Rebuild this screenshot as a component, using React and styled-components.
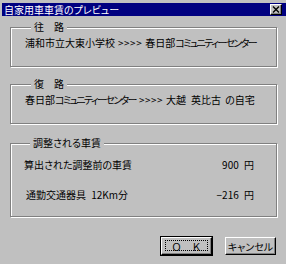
import styled, { createGlobalStyle } from "styled-components";

const GlobalStyle = createGlobalStyle`
  html, body {
    margin: 0;
    padding: 0;
    background: #c0c0c0;
  }
  body {
    font-family: "Noto Sans CJK JP", "Liberation Sans", sans-serif;
    font-size: 10px;
    color: #000;
  }
`;

export const Window = styled.div`
  width: 286px;
  height: 264px;
  box-sizing: border-box;
  padding: 3px 0 0 2px;
  background: #c0c0c0;
  overflow: hidden;
  font-feature-settings: "palt";
`;

export const TitleBar = styled.div`
  height: 13px;
  display: flex;
  align-items: center;
  justify-content: space-between;
  padding: 0 4px 0 2px;
  background: #000080;
  color: #fff;
  font-size: 10px;
  line-height: 13px;
`;

export const CloseButton = styled.div`
  width: 12px;
  height: 11px;
  box-sizing: border-box;
  display: flex;
  align-items: center;
  justify-content: center;
  background: #c0c0c0;
  border-top: 1px solid #fff;
  border-left: 1px solid #fff;
  border-right: 1px solid #000;
  border-bottom: 1px solid #000;
  box-shadow: inset -1px -1px 0 #808080;
`;

export const Content = styled.div`
  display: flex;
  flex-direction: column;
  padding: 5px 9px 0 8px;
`;

export const Group = styled.fieldset`
  margin: ${(p) => p.$gap || 0}px 0 0 0;
  padding: ${(p) => p.$pad || "4px 0 17px 14px"};
  border: 1px solid #808080;
  box-shadow: 1px 1px 0 #fff, inset 1px 1px 0 #fff;
  min-width: 0;
`;

export const Legend = styled.legend`
  margin-left: 6px;
  padding: 0 3px;
  background: #c0c0c0;
  line-height: 12px;
  font-size: 10px;
`;

export const RouteText = styled.div`
  line-height: 12px;
  white-space: nowrap;
`;

export const Kana = styled.span`
  letter-spacing: -1.6px;
`;

export const Arrows = styled.span`
  margin: 0 3px;
  letter-spacing: 0.5px;
`;

export const Gap = styled.span`
  display: inline-block;
  width: ${(p) => p.$w}px;
`;

export const FareRow = styled.div`
  display: flex;
  justify-content: space-between;
  line-height: 12px;
  padding: 0 22px 0 ${(p) => p.$indent || 0}px;
  margin-top: ${(p) => p.$top || 0}px;
  word-spacing: 3px;
`;

export const ButtonRow = styled.div`
  display: flex;
  justify-content: flex-end;
  gap: 13px;
  margin-top: 20px;
  padding-right: 1px;
`;

export const Button = styled.button`
  width: 51px;
  height: 18px;
  padding: 0;
  position: relative;
  font-family: inherit;
  font-size: 10px;
  background: #c0c0c0;
  color: #000;
  border-top: 1px solid #fff;
  border-left: 1px solid #fff;
  border-right: 1px solid #000;
  border-bottom: 1px solid #000;
  box-shadow: ${(p) =>
    p.$default
      ? "0 0 0 1px #000, inset -1px -1px 0 #808080"
      : "inset -1px -1px 0 #808080"};
  font-feature-settings: ${(p) => (p.$default ? "normal" : '"palt"')};
`;

export const FocusRing = styled.span`
  position: absolute;
  inset: 2px 3px 3px 3px;
  border: 1px dotted #000;
`;

function App() {
  return (
    <>
      <GlobalStyle />
      <Window>
        <TitleBar>
          <span>自家用車車賃のプレビュー</span>
          <CloseButton>
            <svg width="8" height="7" viewBox="0 0 8 7">
              <path d="M1 0.5 L7 6.5 M7 0.5 L1 6.5" stroke="#000" strokeWidth="1.4" />
            </svg>
          </CloseButton>
        </TitleBar>
        <Content>
          <Group>
            <Legend>往　路</Legend>
            <RouteText>
              浦和市立大東小学校<Arrows>&gt;&gt;&gt;&gt;</Arrows>春日部<Kana>コミュニティーセンター</Kana>
            </RouteText>
          </Group>
          <Group $gap={11}>
            <Legend>復　路</Legend>
            <RouteText>
              春日部<Kana>コミュニティーセンター</Kana><Arrows>&gt;&gt;&gt;&gt;</Arrows>大越<Gap $w={5} />英比古<Gap $w={4} />の自宅
            </RouteText>
          </Group>
          <Group $gap={13} $pad="10px 0 15px 13px">
            <Legend>調整される車賃</Legend>
            <FareRow>
              <span>算出された調整前の車賃</span>
              <span>900 円</span>
            </FareRow>
            <FareRow $top={18} $indent={2}>
              <span>通勤交通器具 12Km分</span>
              <span>−216 円</span>
            </FareRow>
          </Group>
          <ButtonRow>
            <Button $default>
              Ｏ　Ｋ
              <FocusRing />
            </Button>
            <Button>キャンセル</Button>
          </ButtonRow>
        </Content>
      </Window>
    </>
  );
}

export default App;
